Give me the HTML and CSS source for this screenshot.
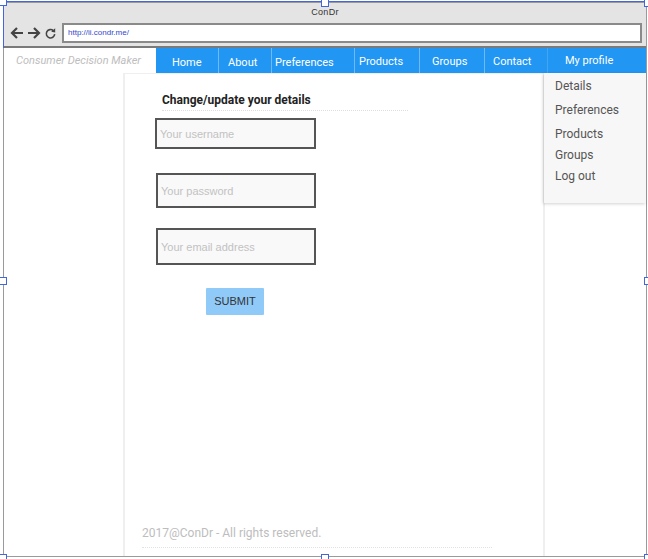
FILE: index.html
```html
<!DOCTYPE html>
<html>
<head>
<meta charset="utf-8">
<title>ConDr</title>
<link rel="stylesheet" href="styles.css">
</head>
<body>
<div class="frame">
  <div class="chrome">
    <div class="title">ConDr</div>
    <div class="addr-row">
      <div class="navicons">
        <svg width="52" height="14" viewBox="0 0 52 14">
          <path d="M6 7 H17 M11 2 L6 7 L11 12" fill="none" stroke="#444" stroke-width="2.2"/>
          <path d="M22 7 H33 M28 2 L33 7 L28 12" fill="none" stroke="#444" stroke-width="2.2"/>
          <path d="M47.3 4.6 A4.2 4.2 0 1 0 48.7 8.2" fill="none" stroke="#444" stroke-width="1.6"/>
          <path d="M49.2 2.2 L49.2 6.4 L45.2 5.8 Z" fill="#444"/>
        </svg>
      </div>
      <div class="url">http://ii.condr.me/</div>
    </div>
  </div>
  <div class="page">
    <header class="topbar">
      <div class="brand">Consumer Decision Maker</div>
      <nav class="menu">
        <span class="item n-home">Home</span>
        <span class="item n-about">About</span>
        <span class="item n-pref">Preferences</span>
        <span class="item n-prod">Products</span>
        <span class="item n-groups">Groups</span>
        <span class="item n-contact">Contact</span>
        <span class="item n-profile">My profile</span>
      </nav>
    </header>
    <div class="body">
      <main class="card">
        <h2 class="heading">Change/update your details</h2>
        <div class="field f-user">Your username</div>
        <div class="field f-pass">Your password</div>
        <div class="field f-mail">Your email address</div>
        <div class="btn-row"><span class="btn">SUBMIT</span></div>
        <footer class="foot">2017@ConDr - All rights reserved.</footer>
      </main>
      <div class="dropdown">
        <div class="dd d-first">Details</div>
        <div class="dd">Preferences</div>
        <div class="dd">Products</div>
        <div class="dd d-tight">Groups</div>
        <div class="dd d-tight">Log out</div>
      </div>
    </div>
  </div>
</div>
<div class="selection">
  <span class="h h-tl"></span><span class="h h-tm"></span><span class="h h-tr"></span>
  <span class="h h-ml"></span><span class="h h-mr"></span>
  <span class="h h-bl"></span><span class="h h-bm"></span><span class="h h-br"></span>
</div>
</body>
</html>
```
FILE: styles.css
```css
* { box-sizing: border-box; }
html, body { margin: 0; padding: 0; background: #fff; }
body { width: 648px; height: 559px; position: relative; overflow: hidden; font-family: Roboto, "Liberation Sans", sans-serif; }

.frame {
  position: absolute; left: 3px; top: 2px; width: 644px; height: 555px;
  border: 1px solid #9a9a9a; display: flex; flex-direction: column; background: #fff;
}
.chrome { background: #e4e4e4; height: 45px; border-bottom: 2px solid #7a7a7a; flex: none; }
.title {
  height: 20px; line-height: 18px; text-align: center;
  font-family: "Liberation Sans", Arial, sans-serif; font-size: 9px; color: #333; letter-spacing: 0.3px;
}
.addr-row { display: flex; align-items: center; height: 23px; padding-bottom: 3px; }
.navicons { width: 58px; display: flex; align-items: center; padding-left: 2px; }
.url {
  width: 580px; height: 20px; background: #fff; border: 2px solid #8a8a8a;
  font-family: "Liberation Sans", Arial, sans-serif; font-size: 8px; color: #3348cc;
  line-height: 16px; padding-left: 4px;
}
.page { flex: 1; display: flex; flex-direction: column; }
.topbar { display: flex; height: 25px; flex: none; }
.brand {
  width: 152px; padding-left: 12px; line-height: 25px; font-style: italic;
  font-size: 11px; color: #bdbdbd; white-space: nowrap;
}
.menu { flex: 1; display: flex; background: #2196f3; }
.item {
  color: #fff; font-size: 11px; line-height: 21px; padding-top: 3px; white-space: nowrap;
  border-left: 1px solid rgba(255,255,255,0.35);
}
.n-home { width: 62px; padding-left: 16px; border-left: none; padding-top: 4px; }
.n-about { width: 53px; padding-left: 9px; padding-top: 4px; }
.n-pref { width: 83px; padding-left: 3px; padding-top: 4px; }
.n-prod { width: 65px; padding-left: 4px; }
.n-groups { width: 65px; padding-left: 12px; }
.n-contact { width: 63px; padding-left: 8px; }
.n-profile { flex: 1; padding-left: 17px; padding-top: 2px; border-left-color: rgba(255,255,255,0.15); }

.body { flex: 1; display: flex; position: relative; padding-left: 119px; }
.card {
  width: 422px; border: 2px solid #efefef; border-bottom: none; border-top-width: 1px;
  display: flex; flex-direction: column; padding-left: 30px;
}
.heading {
  margin: 18px 0 0 7px; width: 246px; font-size: 12px; font-weight: 700; color: #222;
  line-height: 16px; padding-bottom: 2px; border-bottom: 1px dotted #ddd;
}
.field {
  width: 161px; border: 2px solid #555; background: #f9f9f9;
  font-family: "Liberation Sans", Arial, sans-serif; font-size: 11px; color: #c2c2c2;
  display: flex; align-items: center; padding-left: 3px;
}
.f-user { height: 31px; margin-top: 7px; }
.f-pass { height: 35px; margin-top: 24px; margin-left: 1px; width: 160px; }
.f-mail { height: 37px; margin-top: 20px; margin-left: 1px; width: 160px; }
.btn-row { margin-top: 23px; padding-left: 51px; }
.btn {
  display: inline-block; width: 58px; height: 27px; line-height: 27px; text-align: center;
  background: #90caf9; color: #333; font-family: "Liberation Sans", Arial, sans-serif; font-size: 11px;
  border-radius: 1px;
}
.foot {
  margin-top: auto; margin-left: -13px; margin-bottom: 8px; width: 350px;
  font-size: 12px; color: #bdbdbd; line-height: 16px; padding-bottom: 6px;
  border-bottom: 1px dotted #e2e2e2;
}
.dropdown {
  position: absolute; left: 540px; top: 0; right: 0; height: 130px;
  background: #f7f7f7; box-shadow: -1px 1px 3px rgba(0,0,0,0.18);
  padding-left: 11px; padding-top: 5px;
}
.dd { font-size: 12px; color: #555; line-height: 16px; margin-top: 8px; }
.d-first { margin-top: 0; }
.d-tight { margin-top: 5px; }

.selection {
  position: absolute; left: 3px; top: 1px; width: 645px; height: 556px;
  border-top: 1px solid #4466dd; pointer-events: none;
}
.selection::before {
  content: ""; position: absolute; left: 0; top: 0; width: 1px; height: 46px; background: #4466dd;
}
.h {
  position: absolute; width: 8px; height: 8px; background: #fff; border: 1.5px solid #4466dd;
}
.h-tl { left: -4px; top: -4px; }
.h-tm { left: 318px; top: -3px; }
.h-tr { left: 641px; top: -3px; }
.h-ml { left: -4px; top: 275px; }
.h-mr { left: 641px; top: 275px; }
.h-bl { left: -4px; top: 552px; }
.h-bm { left: 318px; top: 552px; }
.h-br { left: 641px; top: 552px; }
```
